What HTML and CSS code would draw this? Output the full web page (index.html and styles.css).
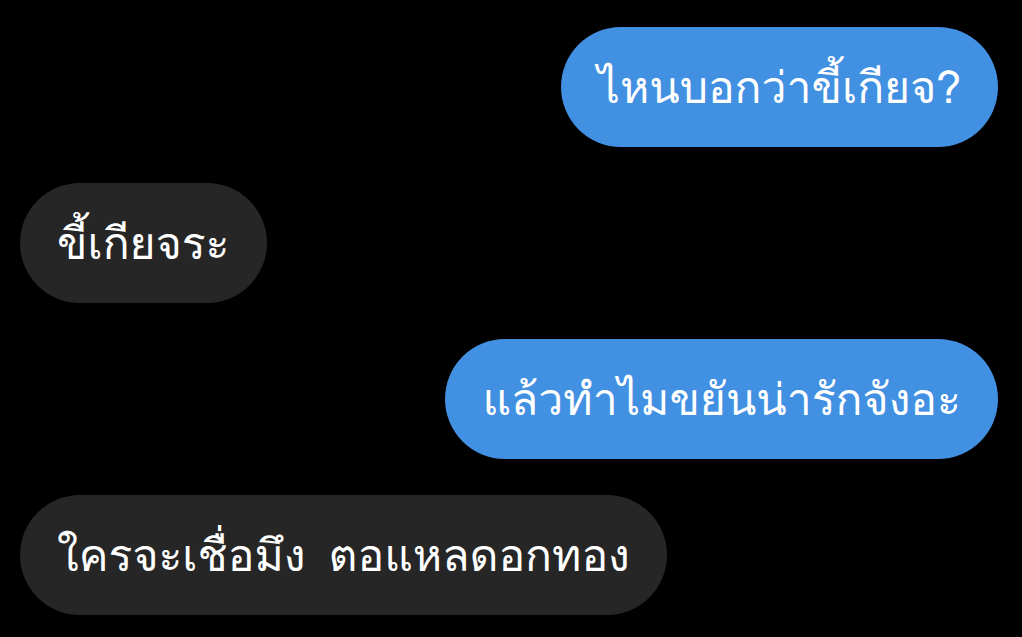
FILE: index.html
```html
<!DOCTYPE html>
<html lang="th">
<head>
    <meta charset="UTF-8">
    <meta name="viewport" content="width=device-width, initial-scale=1.0">
    <title>Chat</title>
    <link rel="stylesheet" href="styles.css">
</head>
<body>
    <div class="chat">
        <div class="msg sent"><span class="bubble">ไหนบอกว่าขี้เกียจ?</span></div>
        <div class="msg received"><span class="bubble">ขี้เกียจระ</span></div>
        <div class="msg sent"><span class="bubble">แล้วทำไมขยันน่ารักจังอะ</span></div>
        <div class="msg received"><span class="bubble">ใครจะเชื่อมึง ตอแหลดอกทอง</span></div>
    </div>
</body>
</html>
```

FILE: styles.css
```css
html, body {
    background: #000;
}
body {
    margin: 0;
    padding: 27px 24px 0 20px;
    font-family: "Loma", "DejaVu Sans", sans-serif;
    color: #fff;
}
.chat {
    display: flex;
    flex-direction: column;
    gap: 36px;
}
.msg {
    display: flex;
}
.msg.sent {
    justify-content: flex-end;
}
.msg.received {
    justify-content: flex-start;
}
.bubble {
    display: flex;
    align-items: center;
    height: 120px;
    box-sizing: border-box;
    padding: 0 37px;
    border-radius: 60px;
    font-size: 44.5px;
    word-spacing: 8px;
    white-space: pre;
}
.sent .bubble {
    background: #4290e2;
}
.received .bubble {
    background: #262626;
}
```
